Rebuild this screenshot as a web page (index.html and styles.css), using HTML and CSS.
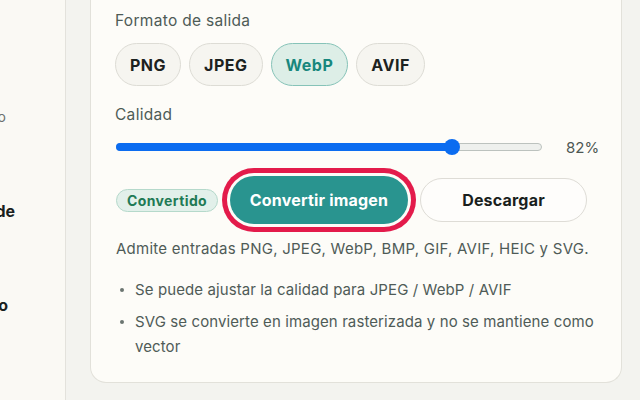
FILE: index.html
```html
<!DOCTYPE html>
<html lang="es">
<head>
<meta charset="utf-8">
<title>Convertir imagen</title>
<link rel="stylesheet" href="styles.css">
</head>
<body>
<div class="app">
  <aside class="sidebar">
    <div class="nav-item nav-sub nav-a"><span>Seleccionar archivo</span></div>
    <div class="nav-item nav-bold nav-b"><span>Conversor de</span></div>
    <div class="nav-item nav-bold nav-c"><span>Historial de trabajo</span></div>
  </aside>
  <main class="main">
    <section class="card">
      <div class="label">Formato de salida</div>
      <div class="pills">
        <button class="pill">PNG</button>
        <button class="pill">JPEG</button>
        <button class="pill pill-active">WebP</button>
        <button class="pill">AVIF</button>
      </div>
      <div class="label label-quality">Calidad</div>
      <div class="slider-row">
        <div class="track">
          <div class="fill" style="width: 79%"></div>
          <div class="thumb" style="left: 79%"></div>
        </div>
        <span class="value">82%</span>
      </div>
      <div class="actions">
        <span class="badge">Convertido</span>
        <button class="btn btn-primary">Convertir imagen</button>
        <button class="btn btn-secondary">Descargar</button>
      </div>
      <p class="desc">Admite entradas PNG, JPEG, WebP, BMP, GIF, AVIF, HEIC y SVG.</p>
      <ul class="notes">
        <li>Se puede ajustar la calidad para JPEG / WebP / AVIF</li>
        <li>SVG se convierte en imagen rasterizada y no se mantiene como vector</li>
      </ul>
    </section>
  </main>
</div>
</body>
</html>
```

FILE: styles.css
```css
* { box-sizing: border-box; }
html, body {
  margin: 0;
  padding: 0;
  height: 100%;
}
body {
  font-family: Inter, "Noto Sans", "Liberation Sans", sans-serif;
  background: #f3f3ef;
  color: #1c2220;
  overflow: hidden;
}
.app {
  display: flex;
  height: 400px;
}
.sidebar {
  width: 66px;
  flex: none;
  background: #faf9f4;
  border-right: 1px solid #e3e2dc;
  overflow: hidden;
  display: flex;
  flex-direction: column;
  padding-top: 107px;
}
.nav-item {
  display: flex;
  justify-content: flex-end;
  white-space: nowrap;
  height: 20px;
  line-height: 20px;
}
.nav-sub {
  font-size: 14px;
  color: #6a716e;
}
.nav-bold {
  font-size: 16px;
  font-weight: 700;
  color: #1a1f1d;
}
.nav-a { padding-right: 59px; }
.nav-b { padding-right: 50px; margin-top: 74px; }
.nav-c { padding-right: 57px; margin-top: 74px; }

.main {
  flex: 1;
  padding: 0 18px 17px 24px;
  display: flex;
  flex-direction: column;
}
.card {
  flex: 1;
  background: #fdfcf8;
  border: 1px solid #e2e1da;
  border-top: none;
  border-radius: 0 0 16px 16px;
  padding: 11px 24px 0 24px;
}
.label {
  font-size: 15.5px;
  letter-spacing: 0.3px;
  line-height: 20px;
  color: #4e5b56;
}
.pills {
  display: flex;
  gap: 8px;
  margin-top: 12px;
}
.pill {
  font-family: inherit;
  font-size: 16px;
  font-weight: 700;
  letter-spacing: 0.5px;
  color: #1c2220;
  background: #f6f5f0;
  border: 1px solid #dddcd5;
  border-radius: 22px;
  height: 43px;
  padding: 0 14px;
}
.pill-active {
  background: #ddeee7;
  border-color: #86c3b8;
  color: #18877d;
}
.label-quality {
  margin-top: 19px;
}
.slider-row {
  display: flex;
  align-items: center;
  gap: 24px;
  height: 20px;
  margin-top: 12px;
}
.track {
  position: relative;
  flex: 1;
  height: 8px;
  margin-left: 1px;
  background: #eef0ed;
  border: 1px solid #bcc2be;
  border-radius: 4px;
}
.fill {
  position: absolute;
  left: -1px;
  top: -1px;
  bottom: -1px;
  background: #0b6cf0;
  border-radius: 4px 0 0 4px;
}
.thumb {
  position: absolute;
  top: 50%;
  width: 16px;
  height: 16px;
  margin: -8px 0 0 -8px;
  background: #0b6cf0;
  border-radius: 50%;
}
.value {
  font-size: 15px;
  color: #4d5753;
  width: 31px;
  text-align: right;
  white-space: nowrap;
}
.actions {
  display: flex;
  align-items: center;
  gap: 12px;
  margin-top: 19px;
  height: 48px;
}
.badge {
  font-size: 14px;
  font-weight: 700;
  letter-spacing: 0.4px;
  color: #1f7a55;
  background: #e2f0ea;
  border: 1px solid #b5d9cb;
  border-radius: 12px;
  height: 23px;
  width: 102px;
  text-align: center;
  line-height: 21px;
  margin-left: 1px;
}
.btn {
  font-family: inherit;
  font-size: 16px;
  font-weight: 700;
  border-radius: 24px;
}
.btn-primary {
  color: #ffffff;
  background: #29948f;
  border: none;
  height: 48px;
  width: 178px;
  letter-spacing: 0.2px;
  box-shadow: 0 0 0 3px #fdfcf8, 0 0 0 8px #e31b4b;
}
.btn-secondary {
  color: #1a1f1d;
  background: #fefdfb;
  border: 1px solid #dedcd6;
  height: 44px;
  width: 167px;
  letter-spacing: 0.2px;
}
.desc {
  margin: 12px 0 0 1px;
  font-size: 15px;
  letter-spacing: 0.25px;
  line-height: 25px;
  color: #4f5b57;
}
.notes {
  list-style: none;
  margin: 16px 0 0 0;
  padding: 0 0 0 20px;
  font-size: 15px;
  letter-spacing: 0.1px;
  line-height: 25px;
  color: #4f5b57;
}
.notes li {
  position: relative;
  margin-bottom: 7px;
}
.notes li::before {
  content: "";
  position: absolute;
  left: -15px;
  top: 11px;
  width: 4px;
  height: 4px;
  border-radius: 50%;
  background: #6b7571;
}
```
